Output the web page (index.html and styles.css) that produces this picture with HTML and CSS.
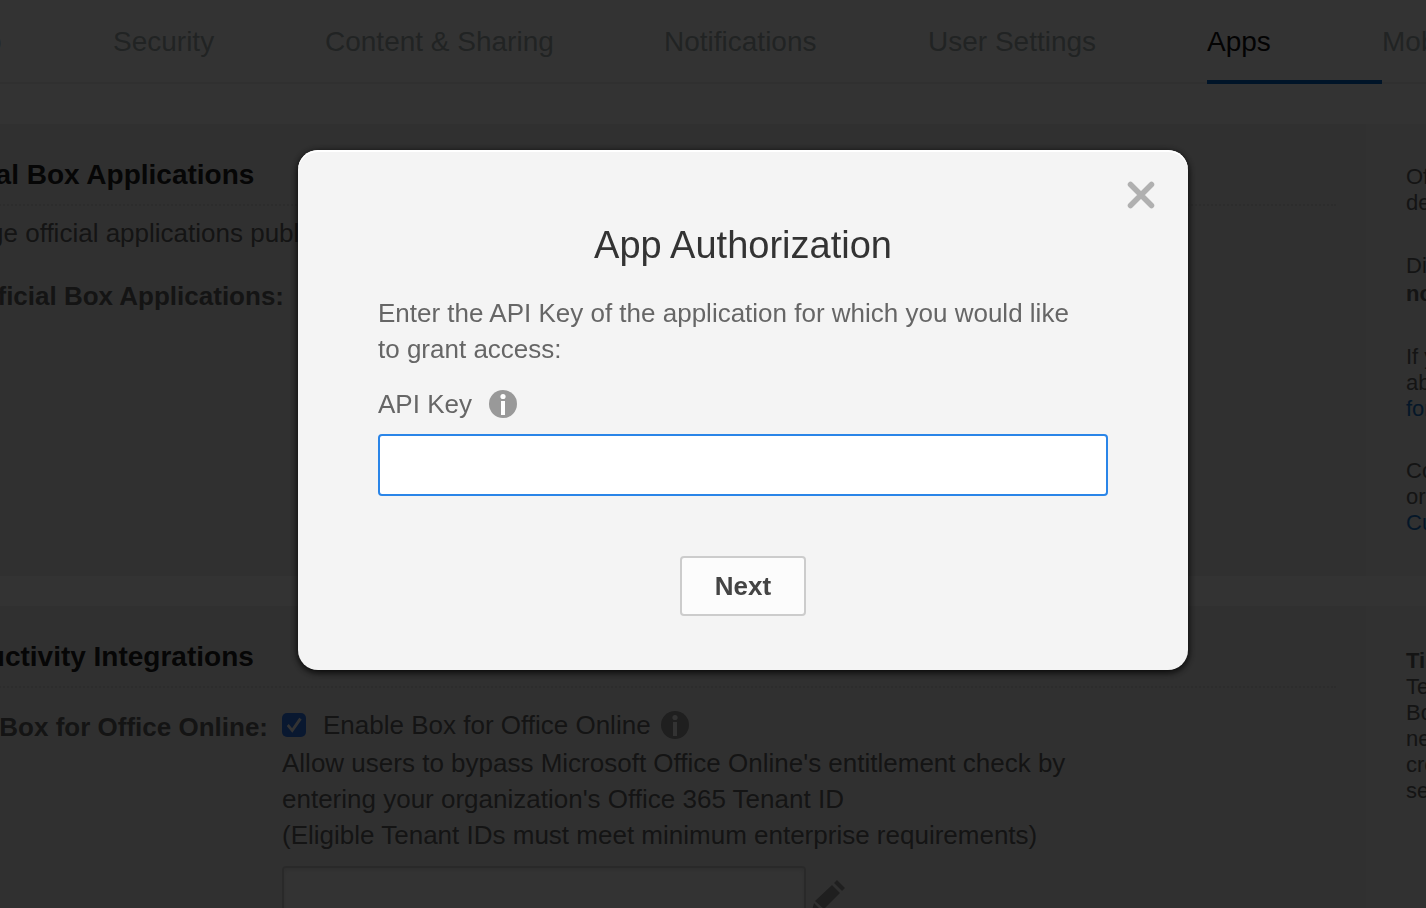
FILE: index.html
```html
<!DOCTYPE html>
<html lang="en">
<head>
    <meta charset="UTF-8">
    <meta name="viewport" content="width=device-width, initial-scale=1.0">
    <title>Apps</title>
    <link rel="stylesheet" href="styles.css">
</head>
<body>
<div class="page">
    <nav class="tabs">
        <a href="#">Account Info</a>
        <a href="#">Security</a>
        <a href="#">Content &amp; Sharing</a>
        <a href="#">Notifications</a>
        <a href="#">User Settings</a>
        <a href="#" class="active">Apps</a>
        <a href="#">Mobile</a>
    </nav>

    <section class="panel">
        <div class="main">
            <h2>Official Box Applications</h2>
            <p class="intro">Manage official applications published by Box</p>
            <div class="row">
                <span class="row-label wide">Official Box Applications:</span>
            </div>
        </div>
        <aside class="help">
            <p>Official<br>developed</p>
            <p class="note">Disabling<br><b>not</b></p>
            <p>If you<br>about<br><a href="#">forum</a></p>
            <p>Contact<br>or<br><a href="#">Customer</a></p>
        </aside>
    </section>

    <section class="panel">
        <div class="main">
            <h2>Productivity Integrations</h2>
            <div class="row">
                <span class="row-label">Box for Office Online:</span>
                <div class="row-body">
                    <div class="check-line">
                        <input type="checkbox" id="office" checked>
                        <label for="office">Enable Box for Office Online</label>
                        <svg class="info" viewBox="0 0 28 28">
                            <circle cx="14" cy="14" r="14" fill="#999"/>
                            <circle cx="14" cy="6.5" r="2.6" fill="#fff"/>
                            <rect x="12" y="11" width="4" height="14" fill="#fff"/>
                        </svg>
                    </div>
                    <label class="tenant-label" for="tenant">Allow users to bypass Microsoft Office Online's entitlement check by<br>entering your organization's Office 365 Tenant ID<br>(Eligible Tenant IDs must meet minimum enterprise requirements)</label>
                    <div class="tenant-line">
                        <input type="text" id="tenant">
                        <svg class="pencil" viewBox="0 0 36 36">
                            <path d="M27 0l8 8-3 3-8-8zM22 5l8 8-16 16-9-8zM4 23l8 8-11 3z" fill="#999"/>
                        </svg>
                    </div>
                </div>
            </div>
        </div>
        <aside class="help tip">
            <p><b>Tip</b><br>Tenant<br>Box<br>need<br>created<br>settings</p>
        </aside>
    </section>
</div>

<div class="overlay">
    <form class="modal" role="dialog" aria-labelledby="modal-title">
        <button type="button" class="close" aria-label="Close">
            <svg viewBox="0 0 28 28">
                <path d="M3.5 3.5l21 21M24.5 3.5l-21 21" stroke="#b0b0b0" stroke-width="5.5" stroke-linecap="round"/>
            </svg>
        </button>
        <h1 id="modal-title">App Authorization</h1>
        <p>Enter the API Key of the application for which you would like<br>to grant access:</p>
        <div class="key-label">
            <label for="api-key">API Key</label>
            <svg class="info" viewBox="0 0 28 28">
                <circle cx="14" cy="14" r="14" fill="#999"/>
                <circle cx="14" cy="6.5" r="2.6" fill="#fff"/>
                <rect x="12" y="11" width="4" height="14" fill="#fff"/>
            </svg>
        </div>
        <input type="text" id="api-key">
        <button type="submit" class="next">Next</button>
    </form>
</div>
</body>
</html>
```
FILE: styles.css
```css
* {
    box-sizing: border-box;
}

body {
    margin: 0;
    height: 100vh;
    overflow: hidden;
    font-family: "Liberation Sans", Arial, sans-serif;
    font-size: 26px;
    line-height: 36px;
    color: #666;
    background: #fff;
}

h1, h2, p {
    margin: 0;
}

a {
    color: #1a75c9;
    text-decoration: none;
}

/* the settings page is wider than the window and scrolled to the right */
.page {
    margin-left: -76px;
    white-space: nowrap;
}

/* tabs */
.tabs {
    display: grid;
    grid-template-columns: 189px 212px 339px 264px 279px 175px 200px;
    height: 84px;
    margin-bottom: 40px;
    font-size: 28px;
    border-bottom: 2px solid #f0f0f0;
}

.tabs a {
    height: 84px;
    padding-top: 24px;
    color: #a5b0b0;
}

.tabs a:first-child {
    margin-left: -78px;
}

.tabs .active {
    color: #111;
    border-bottom: 4px solid #0064c8;
}

/* panels */
.panel {
    display: flex;
    min-height: 452px;
    margin-bottom: 30px;
    background: #f0f0f0;
}

.main {
    flex: 1;
    padding: 32px 30px 0 0;
}

.main h2 {
    height: 50px;
    margin-bottom: 9px;
    font-size: 28px;
    line-height: 38px;
    color: #222;
    border-bottom: 2px dotted #ddd;
}

.intro {
    height: 36px;
    margin: 0 0 27px;
}

.row {
    display: flex;
    gap: 14px;
}

.row-label {
    width: 344px;
    font-weight: bold;
    text-align: right;
}

.row-label.wide {
    width: 360px;
}

.help {
    width: 60px;
    padding: 40px 0 0 40px;
    overflow: hidden;
    font-size: 22px;
    line-height: 26px;
    background: #f2f2f2;
}

.help p {
    margin-bottom: 36px;
}

.help .note {
    line-height: 28px;
}

.tip {
    padding-top: 42px;
}

.panel + .panel .row {
    padding-top: 12px;
}

.check-line {
    display: flex;
    align-items: center;
    height: 32px;
    margin-bottom: 4px;
}

.check-line label {
    margin: 0 10px 0 17px;
}

.check-line input {
    appearance: none;
    width: 24px;
    height: 24px;
    margin: 0;
    border-radius: 5px;
    background: #3078ee;
}

.check-line input::before {
    content: "";
    display: block;
    width: 24px;
    height: 24px;
    background: #fff;
    clip-path: polygon(20% 54%, 28% 46%, 42% 64%, 72% 20%, 82% 27%, 43% 82%);
}

.info {
    width: 28px;
    height: 28px;
}

.tenant-label {
    display: block;
    margin-bottom: 13px;
}

.tenant-line {
    display: flex;
    gap: 4px;
}

.tenant-line input {
    width: 524px;
    height: 60px;
    border: 2px solid #ccc;
    border-radius: 4px;
    background: #fff;
    box-shadow: inset 0 2px 4px #e4e4e4;
}

.pencil {
    width: 36px;
    height: 36px;
    margin-top: 14px;
}

/* modal */
.overlay {
    position: fixed;
    inset: 0;
    padding: 150px 0 0 60px;
    background: rgba(0, 0, 0, 0.8);
}

.modal {
    position: relative;
    width: 890px;
    max-width: 100%;
    margin: 0 auto;
    padding: 73px 80px 54px;
    border-radius: 20px;
    background: #f4f4f4;
    box-shadow: inset 0 2px 0 #fff, 0 2px 8px #000;
}

.modal h1 {
    margin-bottom: 28px;
    font-size: 38px;
    font-weight: normal;
    line-height: 44px;
    text-align: center;
    color: #333;
}

.modal p {
    margin-bottom: 19px;
}

.close {
    position: absolute;
    top: 31px;
    right: 33px;
    width: 28px;
    height: 28px;
    padding: 0;
    border: 0;
    background: none;
    cursor: pointer;
}

.close svg {
    display: block;
}

.key-label {
    display: flex;
    align-items: center;
    gap: 17px;
    margin-bottom: 12px;
}

#api-key {
    display: block;
    width: 100%;
    height: 62px;
    padding: 0 14px;
    font: inherit;
    border: 2px solid #2a85e8;
    border-radius: 4px;
    outline: 0;
    background: #fff;
}

.next {
    display: block;
    width: 126px;
    height: 60px;
    margin: 60px auto 0;
    font: bold 26px "Liberation Sans", Arial, sans-serif;
    color: #444;
    border: 2px solid #ccc;
    border-radius: 4px;
    background: #fcfcfc;
    cursor: pointer;
}
```
